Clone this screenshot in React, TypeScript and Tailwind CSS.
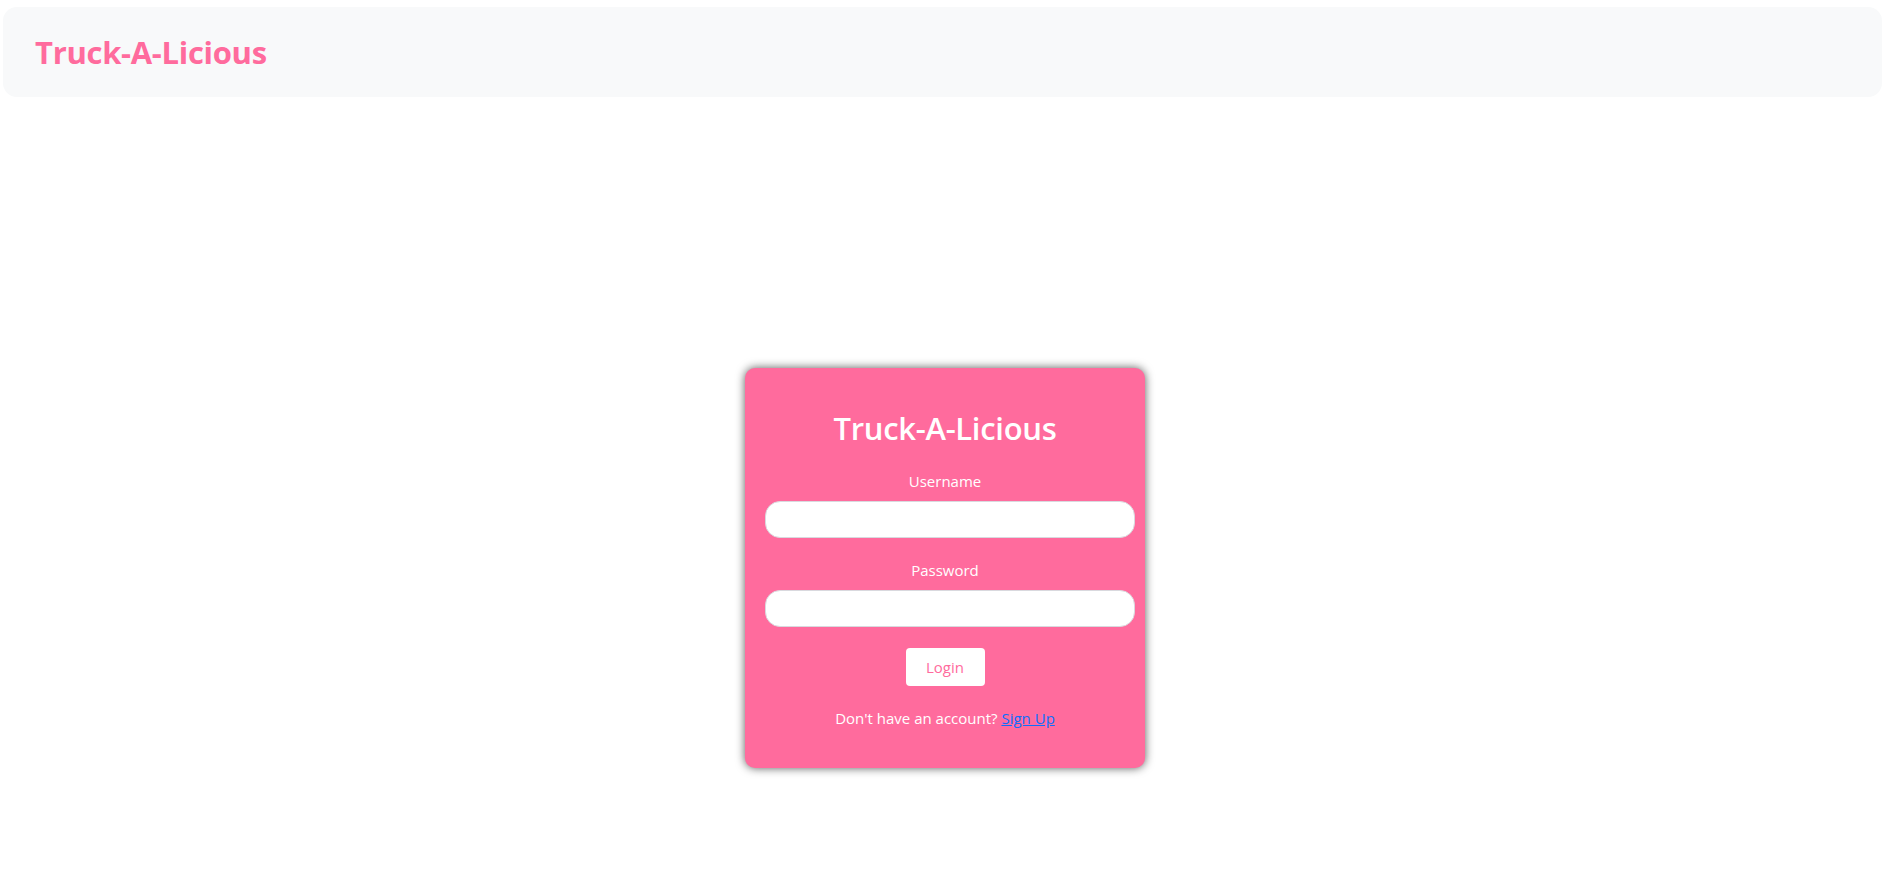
const App = () => {
  return (
    <div className="min-h-screen bg-white font-['Open_Sans',sans-serif]">
      <nav className="mx-[3px] mt-[7px] flex h-[90px] items-center rounded-[14px] bg-[#f8f9fa] px-[32px]">
        <h1 className="text-[31px] font-bold tracking-[-0.3px] text-[#ff6b9d]">Truck-A-Licious</h1>
      </nav>

      <div className="flex justify-center pt-[271px] pl-[5px]">
        <div className="flex w-[400px] flex-col items-center rounded-[10px] bg-[#ff6b9d] px-[20px] pt-[40px] pb-[38px] text-white shadow-[0_0_10px_rgba(0,0,0,0.65)]">
          <h2 className="text-[31px] font-semibold leading-[40px] tracking-[-0.3px]">Truck-A-Licious</h2>

          <label className="mt-[21px] text-[15px] leading-[24px]">Username</label>
          <input
            type="text"
            className="mt-[8px] h-[37px] w-[370px] self-start rounded-[15px] border border-[#d9d9de] bg-white px-3 text-black outline-none"
          />

          <label className="mt-[20px] text-[15px] leading-[24px]">Password</label>
          <input
            type="password"
            className="mt-[8px] h-[37px] w-[370px] self-start rounded-[15px] border border-[#d9d9de] bg-white px-3 text-black outline-none"
          />

          <button className="mt-[21px] h-[38px] w-[79px] rounded-[4px] bg-white text-[15px] text-[#ff6b9d]">
            Login
          </button>

          <p className="mt-[20px] text-[15px] leading-[24px]">
            Don't have an account?{" "}
            <a href="#" className="text-[#0d6efd] underline">
              Sign Up
            </a>
          </p>
        </div>
      </div>
    </div>
  );
};

export default App;
